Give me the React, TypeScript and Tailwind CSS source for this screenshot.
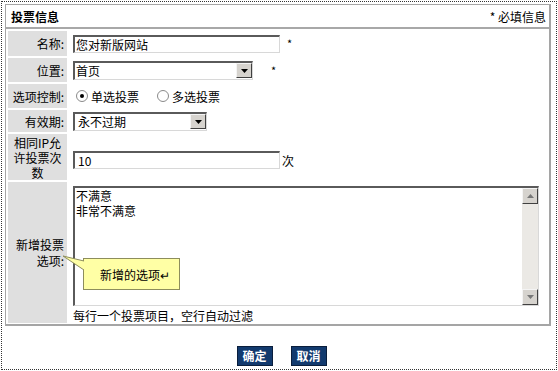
import React from 'react';

const font = "font-['SimSun','Noto_Sans_CJK_SC',sans-serif]";

const inset =
  'border-t-2 border-l-2 border-r border-b border-t-[#5a5a5a] border-l-[#5a5a5a] border-r-[#d8d8d8] border-b-[#d8d8d8] bg-white';

const DropBtn: React.FC = () => (
  <div className="w-[16px] h-[15px] bg-[#d6d3ce] border border-t-[#f4f4f4] border-l-[#f4f4f4] border-r-[#404040] border-b-[#404040] flex items-center justify-center">
    <svg width="7" height="4" viewBox="0 0 7 4">
      <polygon points="0,0 7,0 3.5,4" fill="#000" />
    </svg>
  </div>
);

const DropUp: React.FC = () => (
  <div className="w-[16px] h-[16px] bg-[#d6d3ce] border border-t-[#f4f4f4] border-l-[#f4f4f4] border-r-[#404040] border-b-[#404040] flex items-center justify-center">
    <svg width="7" height="4" viewBox="0 0 7 4">
      <polygon points="0,4 7,4 3.5,0" fill="#777" />
    </svg>
  </div>
);

const DropDn: React.FC = () => (
  <div className="w-[16px] h-[16px] bg-[#d6d3ce] border border-t-[#f4f4f4] border-l-[#f4f4f4] border-r-[#404040] border-b-[#404040] flex items-center justify-center">
    <svg width="7" height="4" viewBox="0 0 7 4">
      <polygon points="0,0 7,0 3.5,4" fill="#777" />
    </svg>
  </div>
);

const Radio: React.FC<{ checked?: boolean }> = ({ checked }) => (
  <span className="w-[12px] h-[12px] rounded-full border border-[#8a8a8a] bg-white flex items-center justify-center">
    {checked && <span className="w-[4px] h-[4px] rounded-full bg-black" />}
  </span>
);

const Label: React.FC<{ h: string; children: React.ReactNode }> = ({ h, children }) => (
  <div className={`w-[59px] ${h} shrink-0 bg-[#dfdfdf] flex items-center justify-end pr-[3px]`}>
    {children}
  </div>
);

const App: React.FC = () => {
  return (
    <div className={`w-[558px] h-[371px] bg-white p-px text-[12px] leading-[15px] text-black ${font}`}>
      <div className="h-[369px] border border-dotted border-[#333] pt-[2px] pl-[3px] relative">
        {/* panel */}
        <div className="w-[546px] h-[322px] border-l border-t border-r-2 border-b-2 border-[#a5a5a5]">
          <div className="h-[24px] flex items-center justify-between pl-[5px] pr-[3px] border-b-2 border-[#a8a8a8]">
            <span className="font-bold">投票信息</span>
            <span>* 必填信息</span>
          </div>
          <div className="pl-[2px] pt-[2px] flex flex-col gap-[2px]">
            {/* 名称 */}
            <div className="flex">
              <Label h="h-[25px]">名称:</Label>
              <div className="flex items-center pl-[6px]">
                <div className={`w-[207px] h-[18px] ${inset} pl-[1px] flex items-center`}>您对新版网站</div>
                <span className="ml-[7px] text-[11px]">*</span>
              </div>
            </div>
            {/* 位置 */}
            <div className="flex">
              <Label h="h-[24px]">位置:</Label>
              <div className="flex items-center pl-[6px]">
                <div className={`w-[180px] h-[19px] ${inset} pl-[1px] flex items-center justify-between`}>
                  <span>首页</span>
                  <DropBtn />
                </div>
                <span className="ml-[18px] text-[11px]">*</span>
              </div>
            </div>
            {/* 选项控制 */}
            <div className="flex">
              <Label h="h-[24px]">选项控制:</Label>
              <div className="flex items-center pl-[9px] gap-[3px]">
                <Radio checked />
                <span>单选投票</span>
                <span className="w-[12px]" />
                <Radio />
                <span>多选投票</span>
              </div>
            </div>
            {/* 有效期 */}
            <div className="flex">
              <Label h="h-[22px]">有效期:</Label>
              <div className="flex items-center pl-[6px]">
                <div className={`w-[134px] h-[19px] ${inset} pl-[3px] flex items-center justify-between`}>
                  <span>永不过期</span>
                  <DropBtn />
                </div>
              </div>
            </div>
            {/* IP */}
            <div className="flex">
              <div className="w-[59px] h-[46px] shrink-0 bg-[#dfdfdf] flex items-center justify-center text-center px-[2px]">
                <span>相同IP允许投票次数</span>
              </div>
              <div className="flex items-center pl-[6px] pt-[6px]">
                <div className={`w-[207px] h-[18px] ${inset} pl-[3px] flex items-center`}>10</div>
                <span className="ml-[2px]">次</span>
              </div>
            </div>
            {/* 新增投票选项 */}
            <div className="flex">
              <Label h="h-[141px]">
                <span className="text-right leading-[16px] w-[48px]">新增投票选项:</span>
              </Label>
              <div className="flex flex-col pl-[6px] pt-[4px]">
                <div className={`w-[466px] h-[120px] ${inset} flex`}>
                  <div className="flex-1 pl-[1px] flex flex-col">
                    <span className="leading-[15px]">不满意</span>
                    <span className="leading-[15px]">非常不满意</span>
                  </div>
                  <div className="w-[16px] flex flex-col bg-[#ebe9e5]">
                    <DropUp />
                    <div className="flex-1" />
                    <DropDn />
                  </div>
                </div>
                <div className="mt-[2px]">每行一个投票项目，空行自动过滤</div>
              </div>
            </div>
          </div>
        </div>

        {/* buttons */}
        <div className="flex justify-center gap-[18px] mt-[20px] pl-[2px]">
          <button className="w-[36px] h-[20px] bg-[#123a6e] border border-[#0a1e3c] text-white font-bold text-[12px] leading-none">
            确定
          </button>
          <button className="w-[36px] h-[20px] bg-[#123a6e] border border-[#0a1e3c] text-white font-bold text-[12px] leading-none">
            取消
          </button>
        </div>

        {/* callout */}
        <div className="absolute left-[81px] top-[256px] w-[97px] h-[32px] bg-[#ffffa5] border border-[#8d8d5c] flex items-center pl-[16px]">
          <span>新增的选项↵</span>
        </div>
        <svg className="absolute left-[60px] top-[252px]" width="24" height="24" viewBox="0 0 24 24">
          <polygon points="22,7 1,2 22,16" fill="#ffffa5" />
          <polyline points="22,7 1,2 22,16" fill="none" stroke="#8d8d5c" strokeWidth="1" />
        </svg>
      </div>
    </div>
  );
};

export default App;
